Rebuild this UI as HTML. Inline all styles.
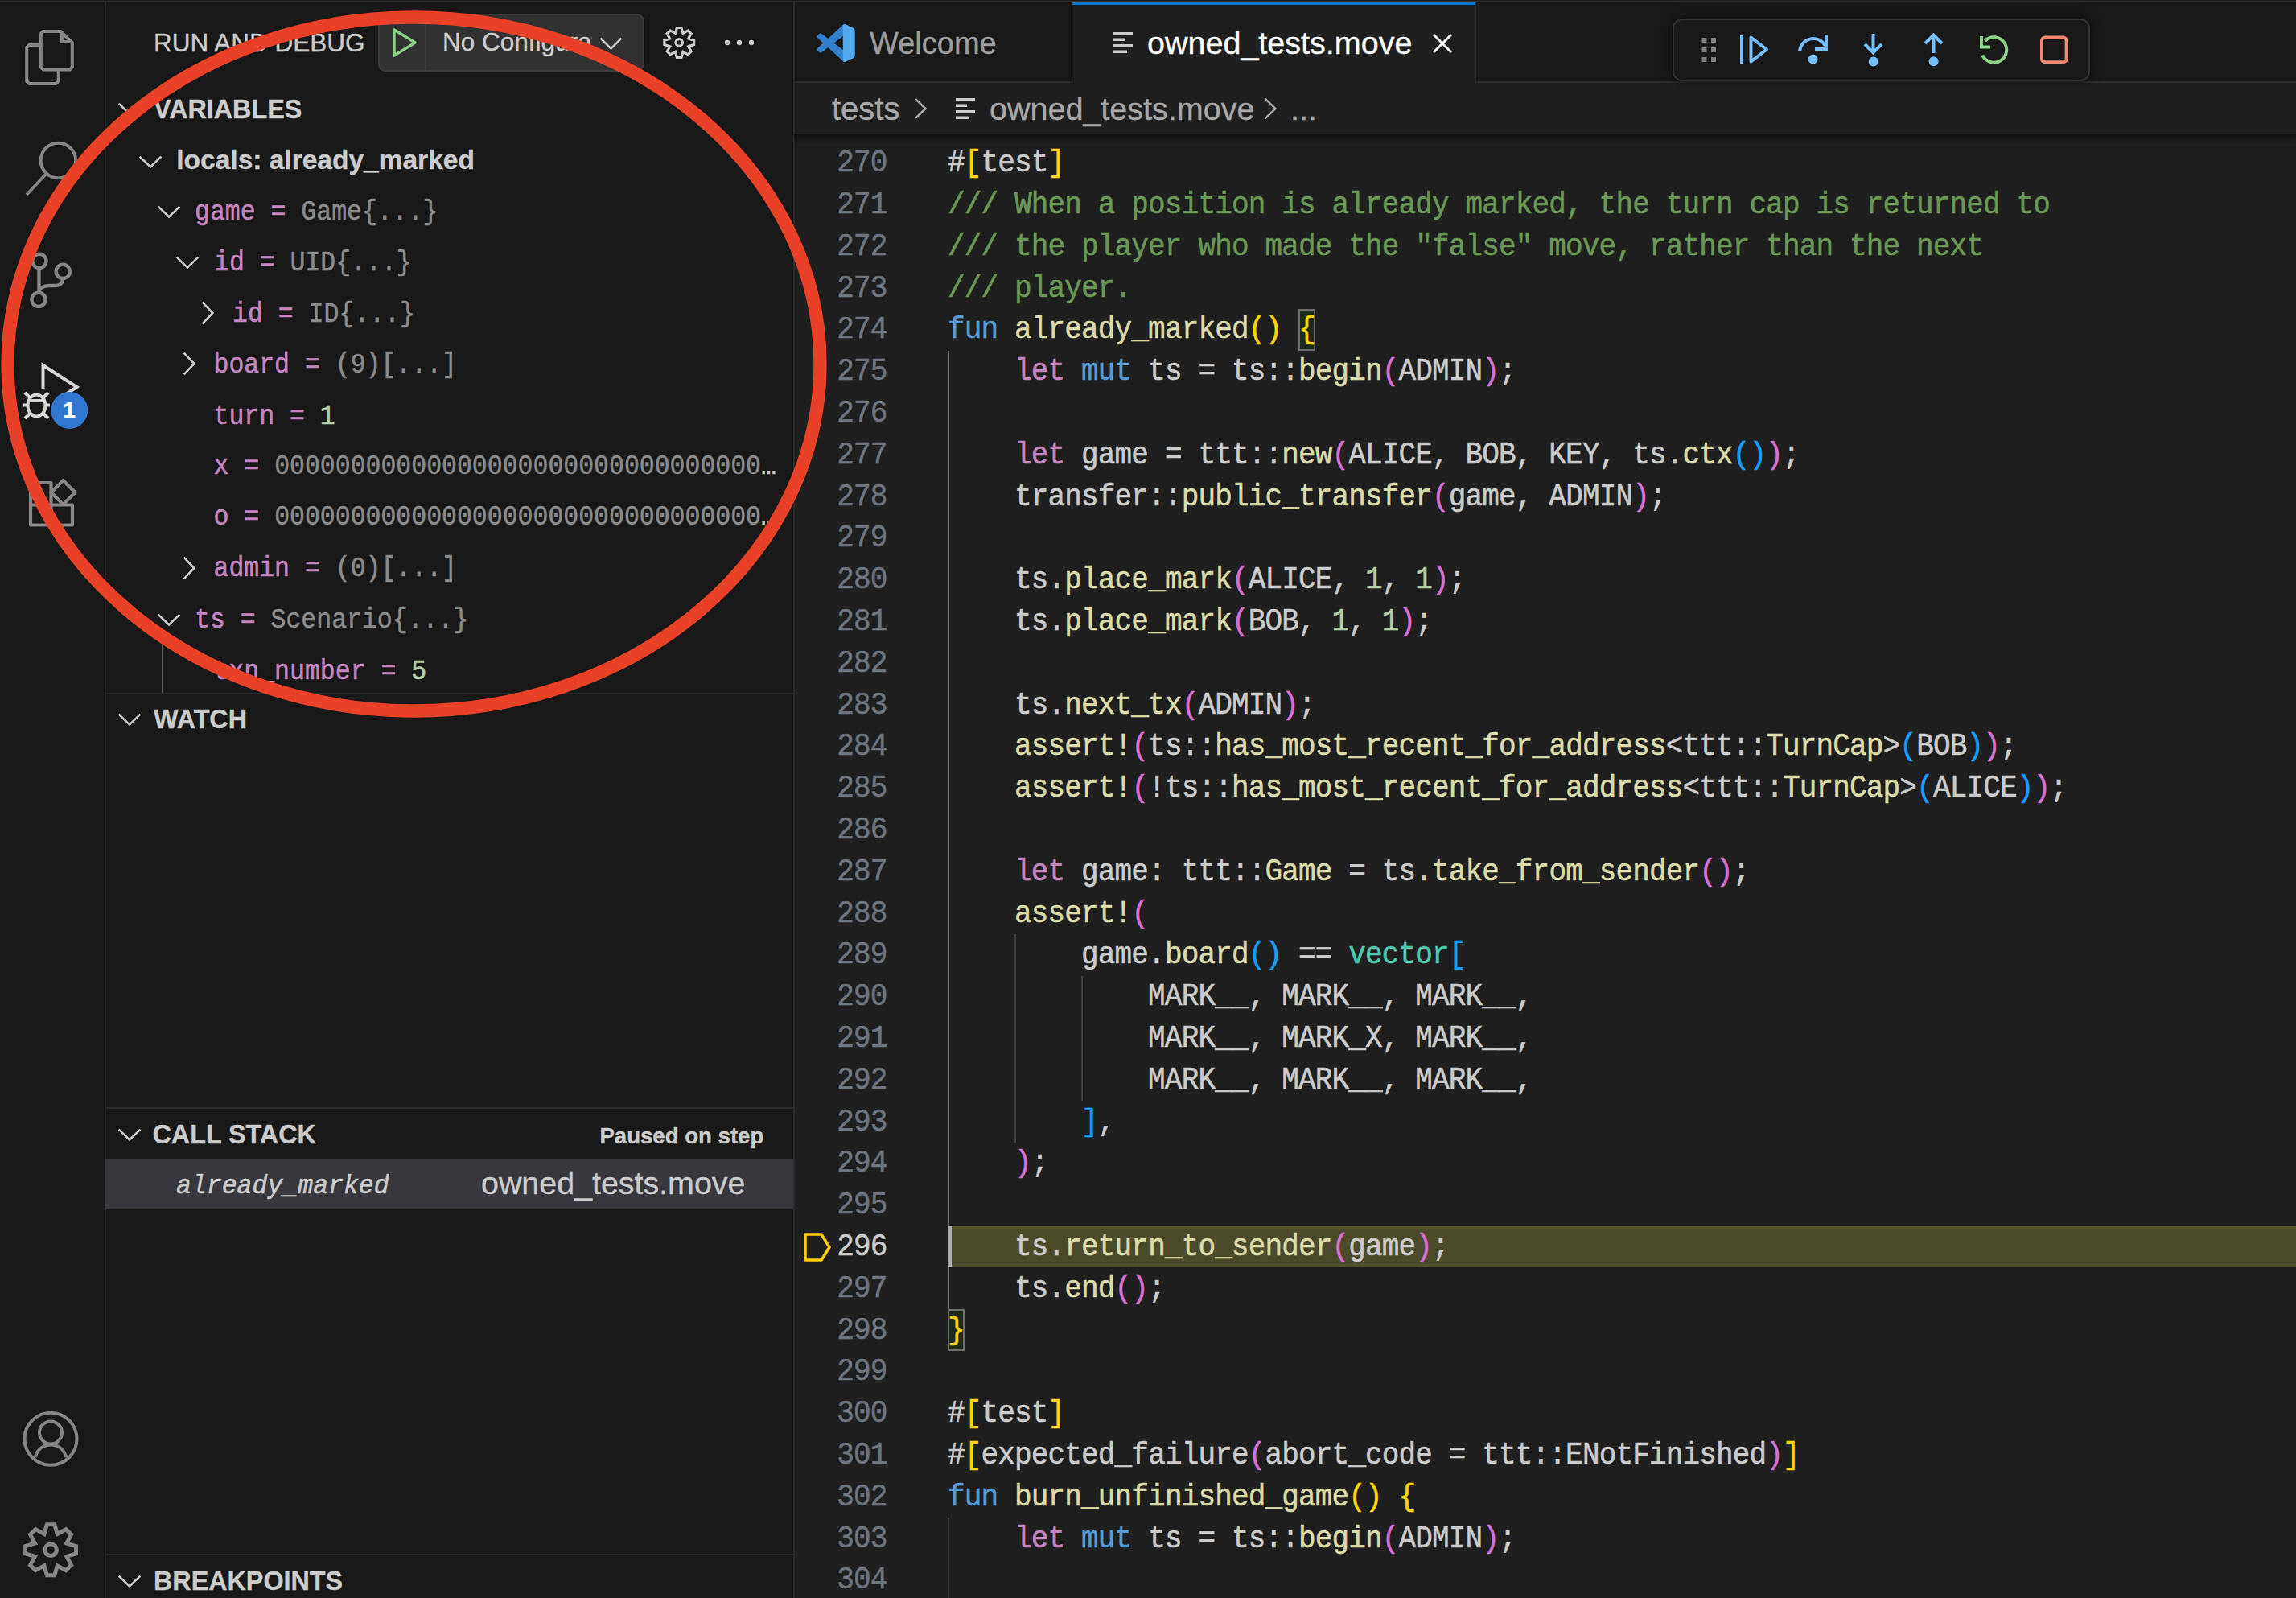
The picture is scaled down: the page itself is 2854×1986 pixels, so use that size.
<!DOCTYPE html>
<html><head><meta charset="utf-8"><style>
html,body{margin:0;padding:0;width:2854px;height:1986px;overflow:hidden;background:#1f1f1f;}
.r{position:absolute;}
.t{position:absolute;font-family:"Liberation Sans",sans-serif;white-space:nowrap;-webkit-text-stroke:0.35px currentColor;}
.m{position:absolute;font-family:"Liberation Mono",monospace;white-space:pre;-webkit-text-stroke:0.5px currentColor;}
.ln{left:1000px;width:102.5px;text-align:right;font-size:36px;line-height:36px;}
</style></head><body>
<div class="r" style="left:0px;top:0px;width:130px;height:1986px;background:#181818;"></div>
<div class="r" style="left:131px;top:0px;width:855px;height:1986px;background:#181818;"></div>
<div class="r" style="left:130px;top:0px;width:2px;height:1986px;background:#2b2b2b;"></div>
<div class="r" style="left:986px;top:0px;width:2px;height:1986px;background:#2b2b2b;"></div>
<div class="r" style="left:988px;top:0px;width:1866px;height:1986px;background:#1f1f1f;"></div>
<div class="r" style="left:988px;top:3px;width:1866px;height:98px;background:#181818;"></div>
<div class="r" style="left:988px;top:101px;width:1866px;height:2px;background:#2b2b2b;"></div>
<div class="r" style="left:1332px;top:3px;width:1px;height:98px;background:#2b2b2b;"></div>
<div class="r" style="left:1333px;top:3px;width:501px;height:100px;background:#1f1f1f;"></div>
<div class="r" style="left:1333px;top:3px;width:501px;height:3px;background:#0078d4;"></div>
<div class="r" style="left:1834px;top:3px;width:1px;height:98px;background:#2b2b2b;"></div>
<div class="r" style="left:0px;top:0px;width:2854px;height:1px;background:#1c1c1c;"></div>
<div class="r" style="left:0px;top:1px;width:2854px;height:2px;background:#2c2c2c;"></div>
<div class="r" style="left:987px;top:167px;width:1867px;height:12px;background:linear-gradient(#111111,rgba(31,31,31,0))"></div>
<div class="r" style="left:1178px;top:1523.5px;width:1676px;height:51.80px;box-sizing:border-box;border-top:4px solid #53522f;border-bottom:4px solid #53522f;background:#4b4a2a"></div>
<div class="r" style="left:1178.0px;top:435.7px;width:2px;height:1191.4px;background:#707070"></div>
<div class="r" style="left:1261.0px;top:1160.9px;width:2px;height:259.0px;background:#404040"></div>
<div class="r" style="left:1344.1px;top:1212.7px;width:2px;height:155.4px;background:#404040"></div>
<div class="r" style="left:1178.0px;top:1886.1px;width:2px;height:103.6px;background:#404040"></div>
<div class="r" style="left:1178px;top:1523.5px;width:5px;height:51.80px;background:#aeafad"></div>
<div class="r" style="left:1614.0px;top:383.9px;width:20.76px;height:51.80px;box-sizing:border-box;border:2px solid #6e6e6e;background:#1c2a1c"></div>
<div class="r" style="left:1178.0px;top:1627.1px;width:20.76px;height:51.80px;box-sizing:border-box;border:2px solid #6e6e6e;background:#1c2a1c"></div>
<div class="m ln" style="top:186.1px;color:#6e7681;letter-spacing:-0.844px;transform:scaleY(1.07);transform-origin:0 27.59px">270</div>
<div class="m" style="left:1178.0px;top:186.1px;font-size:36px;line-height:36px;color:#cccccc;letter-spacing:-0.844px;transform:scaleY(1.07);transform-origin:0 27.59px"><span style="color:#cccccc">#</span><span style="color:#ffd700">[</span><span style="color:#cccccc">test</span><span style="color:#ffd700">]</span></div>
<div class="m ln" style="top:237.9px;color:#6e7681;letter-spacing:-0.844px;transform:scaleY(1.07);transform-origin:0 27.59px">271</div>
<div class="m" style="left:1178.0px;top:237.9px;font-size:36px;line-height:36px;color:#cccccc;letter-spacing:-0.844px;transform:scaleY(1.07);transform-origin:0 27.59px"><span style="color:#6a9955">/// When a position is already marked, the turn cap is returned to</span></div>
<div class="m ln" style="top:289.7px;color:#6e7681;letter-spacing:-0.844px;transform:scaleY(1.07);transform-origin:0 27.59px">272</div>
<div class="m" style="left:1178.0px;top:289.7px;font-size:36px;line-height:36px;color:#cccccc;letter-spacing:-0.844px;transform:scaleY(1.07);transform-origin:0 27.59px"><span style="color:#6a9955">/// the player who made the &quot;false&quot; move, rather than the next</span></div>
<div class="m ln" style="top:341.5px;color:#6e7681;letter-spacing:-0.844px;transform:scaleY(1.07);transform-origin:0 27.59px">273</div>
<div class="m" style="left:1178.0px;top:341.5px;font-size:36px;line-height:36px;color:#cccccc;letter-spacing:-0.844px;transform:scaleY(1.07);transform-origin:0 27.59px"><span style="color:#6a9955">/// player.</span></div>
<div class="m ln" style="top:393.3px;color:#6e7681;letter-spacing:-0.844px;transform:scaleY(1.07);transform-origin:0 27.59px">274</div>
<div class="m" style="left:1178.0px;top:393.3px;font-size:36px;line-height:36px;color:#cccccc;letter-spacing:-0.844px;transform:scaleY(1.07);transform-origin:0 27.59px"><span style="color:#569cd6">fun</span><span style="color:#cccccc"> </span><span style="color:#dcdcaa">already_marked</span><span style="color:#ffd700">()</span><span style="color:#cccccc"> </span><span style="color:#ffd700">{</span></div>
<div class="m ln" style="top:445.1px;color:#6e7681;letter-spacing:-0.844px;transform:scaleY(1.07);transform-origin:0 27.59px">275</div>
<div class="m" style="left:1178.0px;top:445.1px;font-size:36px;line-height:36px;color:#cccccc;letter-spacing:-0.844px;transform:scaleY(1.07);transform-origin:0 27.59px"><span style="color:#cccccc">    </span><span style="color:#c586c0">let</span><span style="color:#cccccc"> </span><span style="color:#569cd6">mut</span><span style="color:#cccccc"> ts = ts::</span><span style="color:#dcdcaa">begin</span><span style="color:#da70d6">(</span><span style="color:#cccccc">ADMIN</span><span style="color:#da70d6">)</span><span style="color:#cccccc">;</span></div>
<div class="m ln" style="top:496.9px;color:#6e7681;letter-spacing:-0.844px;transform:scaleY(1.07);transform-origin:0 27.59px">276</div>
<div class="m ln" style="top:548.7px;color:#6e7681;letter-spacing:-0.844px;transform:scaleY(1.07);transform-origin:0 27.59px">277</div>
<div class="m" style="left:1178.0px;top:548.7px;font-size:36px;line-height:36px;color:#cccccc;letter-spacing:-0.844px;transform:scaleY(1.07);transform-origin:0 27.59px"><span style="color:#cccccc">    </span><span style="color:#c586c0">let</span><span style="color:#cccccc"> game = ttt::</span><span style="color:#dcdcaa">new</span><span style="color:#da70d6">(</span><span style="color:#cccccc">ALICE, BOB, KEY, ts.</span><span style="color:#dcdcaa">ctx</span><span style="color:#179fff">()</span><span style="color:#da70d6">)</span><span style="color:#cccccc">;</span></div>
<div class="m ln" style="top:600.5px;color:#6e7681;letter-spacing:-0.844px;transform:scaleY(1.07);transform-origin:0 27.59px">278</div>
<div class="m" style="left:1178.0px;top:600.5px;font-size:36px;line-height:36px;color:#cccccc;letter-spacing:-0.844px;transform:scaleY(1.07);transform-origin:0 27.59px"><span style="color:#cccccc">    transfer::</span><span style="color:#dcdcaa">public_transfer</span><span style="color:#da70d6">(</span><span style="color:#cccccc">game, ADMIN</span><span style="color:#da70d6">)</span><span style="color:#cccccc">;</span></div>
<div class="m ln" style="top:652.3px;color:#6e7681;letter-spacing:-0.844px;transform:scaleY(1.07);transform-origin:0 27.59px">279</div>
<div class="m ln" style="top:704.1px;color:#6e7681;letter-spacing:-0.844px;transform:scaleY(1.07);transform-origin:0 27.59px">280</div>
<div class="m" style="left:1178.0px;top:704.1px;font-size:36px;line-height:36px;color:#cccccc;letter-spacing:-0.844px;transform:scaleY(1.07);transform-origin:0 27.59px"><span style="color:#cccccc">    ts.</span><span style="color:#dcdcaa">place_mark</span><span style="color:#da70d6">(</span><span style="color:#cccccc">ALICE, </span><span style="color:#b5cea8">1</span><span style="color:#cccccc">, </span><span style="color:#b5cea8">1</span><span style="color:#da70d6">)</span><span style="color:#cccccc">;</span></div>
<div class="m ln" style="top:755.9px;color:#6e7681;letter-spacing:-0.844px;transform:scaleY(1.07);transform-origin:0 27.59px">281</div>
<div class="m" style="left:1178.0px;top:755.9px;font-size:36px;line-height:36px;color:#cccccc;letter-spacing:-0.844px;transform:scaleY(1.07);transform-origin:0 27.59px"><span style="color:#cccccc">    ts.</span><span style="color:#dcdcaa">place_mark</span><span style="color:#da70d6">(</span><span style="color:#cccccc">BOB, </span><span style="color:#b5cea8">1</span><span style="color:#cccccc">, </span><span style="color:#b5cea8">1</span><span style="color:#da70d6">)</span><span style="color:#cccccc">;</span></div>
<div class="m ln" style="top:807.7px;color:#6e7681;letter-spacing:-0.844px;transform:scaleY(1.07);transform-origin:0 27.59px">282</div>
<div class="m ln" style="top:859.5px;color:#6e7681;letter-spacing:-0.844px;transform:scaleY(1.07);transform-origin:0 27.59px">283</div>
<div class="m" style="left:1178.0px;top:859.5px;font-size:36px;line-height:36px;color:#cccccc;letter-spacing:-0.844px;transform:scaleY(1.07);transform-origin:0 27.59px"><span style="color:#cccccc">    ts.</span><span style="color:#dcdcaa">next_tx</span><span style="color:#da70d6">(</span><span style="color:#cccccc">ADMIN</span><span style="color:#da70d6">)</span><span style="color:#cccccc">;</span></div>
<div class="m ln" style="top:911.3px;color:#6e7681;letter-spacing:-0.844px;transform:scaleY(1.07);transform-origin:0 27.59px">284</div>
<div class="m" style="left:1178.0px;top:911.3px;font-size:36px;line-height:36px;color:#cccccc;letter-spacing:-0.844px;transform:scaleY(1.07);transform-origin:0 27.59px"><span style="color:#cccccc">    </span><span style="color:#dcdcaa">assert!</span><span style="color:#da70d6">(</span><span style="color:#cccccc">ts::</span><span style="color:#dcdcaa">has_most_recent_for_address</span><span style="color:#cccccc">&lt;ttt::</span><span style="color:#dcdcaa">TurnCap</span><span style="color:#cccccc">&gt;</span><span style="color:#179fff">(</span><span style="color:#cccccc">BOB</span><span style="color:#179fff">)</span><span style="color:#da70d6">)</span><span style="color:#cccccc">;</span></div>
<div class="m ln" style="top:963.1px;color:#6e7681;letter-spacing:-0.844px;transform:scaleY(1.07);transform-origin:0 27.59px">285</div>
<div class="m" style="left:1178.0px;top:963.1px;font-size:36px;line-height:36px;color:#cccccc;letter-spacing:-0.844px;transform:scaleY(1.07);transform-origin:0 27.59px"><span style="color:#cccccc">    </span><span style="color:#dcdcaa">assert!</span><span style="color:#da70d6">(</span><span style="color:#cccccc">!ts::</span><span style="color:#dcdcaa">has_most_recent_for_address</span><span style="color:#cccccc">&lt;ttt::</span><span style="color:#dcdcaa">TurnCap</span><span style="color:#cccccc">&gt;</span><span style="color:#179fff">(</span><span style="color:#cccccc">ALICE</span><span style="color:#179fff">)</span><span style="color:#da70d6">)</span><span style="color:#cccccc">;</span></div>
<div class="m ln" style="top:1014.9px;color:#6e7681;letter-spacing:-0.844px;transform:scaleY(1.07);transform-origin:0 27.59px">286</div>
<div class="m ln" style="top:1066.7px;color:#6e7681;letter-spacing:-0.844px;transform:scaleY(1.07);transform-origin:0 27.59px">287</div>
<div class="m" style="left:1178.0px;top:1066.7px;font-size:36px;line-height:36px;color:#cccccc;letter-spacing:-0.844px;transform:scaleY(1.07);transform-origin:0 27.59px"><span style="color:#cccccc">    </span><span style="color:#c586c0">let</span><span style="color:#cccccc"> game: ttt::</span><span style="color:#dcdcaa">Game</span><span style="color:#cccccc"> = ts.</span><span style="color:#dcdcaa">take_from_sender</span><span style="color:#da70d6">()</span><span style="color:#cccccc">;</span></div>
<div class="m ln" style="top:1118.5px;color:#6e7681;letter-spacing:-0.844px;transform:scaleY(1.07);transform-origin:0 27.59px">288</div>
<div class="m" style="left:1178.0px;top:1118.5px;font-size:36px;line-height:36px;color:#cccccc;letter-spacing:-0.844px;transform:scaleY(1.07);transform-origin:0 27.59px"><span style="color:#cccccc">    </span><span style="color:#dcdcaa">assert!</span><span style="color:#da70d6">(</span></div>
<div class="m ln" style="top:1170.3px;color:#6e7681;letter-spacing:-0.844px;transform:scaleY(1.07);transform-origin:0 27.59px">289</div>
<div class="m" style="left:1178.0px;top:1170.3px;font-size:36px;line-height:36px;color:#cccccc;letter-spacing:-0.844px;transform:scaleY(1.07);transform-origin:0 27.59px"><span style="color:#cccccc">        game.</span><span style="color:#dcdcaa">board</span><span style="color:#179fff">()</span><span style="color:#cccccc"> == </span><span style="color:#4ec9b0">vector</span><span style="color:#179fff">[</span></div>
<div class="m ln" style="top:1222.1px;color:#6e7681;letter-spacing:-0.844px;transform:scaleY(1.07);transform-origin:0 27.59px">290</div>
<div class="m" style="left:1178.0px;top:1222.1px;font-size:36px;line-height:36px;color:#cccccc;letter-spacing:-0.844px;transform:scaleY(1.07);transform-origin:0 27.59px"><span style="color:#cccccc">            MARK__, MARK__, MARK__,</span></div>
<div class="m ln" style="top:1273.9px;color:#6e7681;letter-spacing:-0.844px;transform:scaleY(1.07);transform-origin:0 27.59px">291</div>
<div class="m" style="left:1178.0px;top:1273.9px;font-size:36px;line-height:36px;color:#cccccc;letter-spacing:-0.844px;transform:scaleY(1.07);transform-origin:0 27.59px"><span style="color:#cccccc">            MARK__, MARK_X, MARK__,</span></div>
<div class="m ln" style="top:1325.7px;color:#6e7681;letter-spacing:-0.844px;transform:scaleY(1.07);transform-origin:0 27.59px">292</div>
<div class="m" style="left:1178.0px;top:1325.7px;font-size:36px;line-height:36px;color:#cccccc;letter-spacing:-0.844px;transform:scaleY(1.07);transform-origin:0 27.59px"><span style="color:#cccccc">            MARK__, MARK__, MARK__,</span></div>
<div class="m ln" style="top:1377.5px;color:#6e7681;letter-spacing:-0.844px;transform:scaleY(1.07);transform-origin:0 27.59px">293</div>
<div class="m" style="left:1178.0px;top:1377.5px;font-size:36px;line-height:36px;color:#cccccc;letter-spacing:-0.844px;transform:scaleY(1.07);transform-origin:0 27.59px"><span style="color:#cccccc">        </span><span style="color:#179fff">]</span><span style="color:#cccccc">,</span></div>
<div class="m ln" style="top:1429.3px;color:#6e7681;letter-spacing:-0.844px;transform:scaleY(1.07);transform-origin:0 27.59px">294</div>
<div class="m" style="left:1178.0px;top:1429.3px;font-size:36px;line-height:36px;color:#cccccc;letter-spacing:-0.844px;transform:scaleY(1.07);transform-origin:0 27.59px"><span style="color:#cccccc">    </span><span style="color:#da70d6">)</span><span style="color:#cccccc">;</span></div>
<div class="m ln" style="top:1481.1px;color:#6e7681;letter-spacing:-0.844px;transform:scaleY(1.07);transform-origin:0 27.59px">295</div>
<div class="m ln" style="top:1532.9px;color:#cccccc;letter-spacing:-0.844px;transform:scaleY(1.07);transform-origin:0 27.59px">296</div>
<div class="m" style="left:1178.0px;top:1532.9px;font-size:36px;line-height:36px;color:#cccccc;letter-spacing:-0.844px;transform:scaleY(1.07);transform-origin:0 27.59px"><span style="color:#cccccc">    ts.</span><span style="color:#dcdcaa">return_to_sender</span><span style="color:#da70d6">(</span><span style="color:#cccccc">game</span><span style="color:#da70d6">)</span><span style="color:#cccccc">;</span></div>
<div class="m ln" style="top:1584.7px;color:#6e7681;letter-spacing:-0.844px;transform:scaleY(1.07);transform-origin:0 27.59px">297</div>
<div class="m" style="left:1178.0px;top:1584.7px;font-size:36px;line-height:36px;color:#cccccc;letter-spacing:-0.844px;transform:scaleY(1.07);transform-origin:0 27.59px"><span style="color:#cccccc">    ts.</span><span style="color:#dcdcaa">end</span><span style="color:#da70d6">()</span><span style="color:#cccccc">;</span></div>
<div class="m ln" style="top:1636.5px;color:#6e7681;letter-spacing:-0.844px;transform:scaleY(1.07);transform-origin:0 27.59px">298</div>
<div class="m" style="left:1178.0px;top:1636.5px;font-size:36px;line-height:36px;color:#cccccc;letter-spacing:-0.844px;transform:scaleY(1.07);transform-origin:0 27.59px"><span style="color:#ffd700">}</span></div>
<div class="m ln" style="top:1688.3px;color:#6e7681;letter-spacing:-0.844px;transform:scaleY(1.07);transform-origin:0 27.59px">299</div>
<div class="m ln" style="top:1740.1px;color:#6e7681;letter-spacing:-0.844px;transform:scaleY(1.07);transform-origin:0 27.59px">300</div>
<div class="m" style="left:1178.0px;top:1740.1px;font-size:36px;line-height:36px;color:#cccccc;letter-spacing:-0.844px;transform:scaleY(1.07);transform-origin:0 27.59px"><span style="color:#cccccc">#</span><span style="color:#ffd700">[</span><span style="color:#cccccc">test</span><span style="color:#ffd700">]</span></div>
<div class="m ln" style="top:1791.9px;color:#6e7681;letter-spacing:-0.844px;transform:scaleY(1.07);transform-origin:0 27.59px">301</div>
<div class="m" style="left:1178.0px;top:1791.9px;font-size:36px;line-height:36px;color:#cccccc;letter-spacing:-0.844px;transform:scaleY(1.07);transform-origin:0 27.59px"><span style="color:#cccccc">#</span><span style="color:#ffd700">[</span><span style="color:#cccccc">expected_failure</span><span style="color:#da70d6">(</span><span style="color:#cccccc">abort_code = ttt::ENotFinished</span><span style="color:#da70d6">)</span><span style="color:#ffd700">]</span></div>
<div class="m ln" style="top:1843.7px;color:#6e7681;letter-spacing:-0.844px;transform:scaleY(1.07);transform-origin:0 27.59px">302</div>
<div class="m" style="left:1178.0px;top:1843.7px;font-size:36px;line-height:36px;color:#cccccc;letter-spacing:-0.844px;transform:scaleY(1.07);transform-origin:0 27.59px"><span style="color:#569cd6">fun</span><span style="color:#cccccc"> </span><span style="color:#dcdcaa">burn_unfinished_game</span><span style="color:#ffd700">()</span><span style="color:#cccccc"> </span><span style="color:#ffd700">{</span></div>
<div class="m ln" style="top:1895.5px;color:#6e7681;letter-spacing:-0.844px;transform:scaleY(1.07);transform-origin:0 27.59px">303</div>
<div class="m" style="left:1178.0px;top:1895.5px;font-size:36px;line-height:36px;color:#cccccc;letter-spacing:-0.844px;transform:scaleY(1.07);transform-origin:0 27.59px"><span style="color:#cccccc">    </span><span style="color:#c586c0">let</span><span style="color:#cccccc"> </span><span style="color:#569cd6">mut</span><span style="color:#cccccc"> ts = ts::</span><span style="color:#dcdcaa">begin</span><span style="color:#da70d6">(</span><span style="color:#cccccc">ADMIN</span><span style="color:#da70d6">)</span><span style="color:#cccccc">;</span></div>
<div class="m ln" style="top:1947.3px;color:#6e7681;letter-spacing:-0.844px;transform:scaleY(1.07);transform-origin:0 27.59px">304</div>
<svg class="r" style="left:995px;top:1528px" width="42" height="44" viewBox="0 0 42 44"><path d="M6 6 H26 L36 22 L26 38 H6 Z" fill="none" stroke="#ffcc00" stroke-width="3.5" stroke-linejoin="round"/></svg>
<svg class="r" style="left:1015px;top:30px" width="48" height="47" viewBox="0 0 100 100">
<path fill="#3280cc" d="M96.46 10.8 75.86.87a6.23 6.23 0 0 0-7.1 1.2L29.33 38.04 12.15 25a4.16 4.16 0 0 0-5.32.24L1.32 30.25a4.16 4.16 0 0 0 0 6.16L16.2 50 1.33 63.59a4.16 4.16 0 0 0 0 6.16l5.5 5a4.16 4.16 0 0 0 5.32.24l17.18-13.04 39.43 35.97a6.23 6.23 0 0 0 7.1 1.2l20.6-9.92A6.25 6.25 0 0 0 100 83.57V16.43a6.25 6.25 0 0 0-3.54-5.63ZM75.02 72.7 45.1 50l29.92-22.7v45.4Z"/>
<path fill="#2489ca" d="M96.46 10.8 75.86.87a6.23 6.23 0 0 0-7.1 1.2L29.33 38.04 12.15 25a4.16 4.16 0 0 0-5.32.24L1.32 30.25a4.16 4.16 0 0 0 0 6.16L16.2 50 29.33 38.04 75.02 2.7v24.6L45.1 50Z" opacity="0.0"/>
<path fill="#56aaec" d="M75.86 99.13a6.23 6.23 0 0 1-7.1-1.2V2.07a6.23 6.23 0 0 1 7.1-1.2l20.6 9.93A6.25 6.25 0 0 1 100 16.43v67.14a6.25 6.25 0 0 1-3.54 5.63Z"/>
</svg>
<div class="t" style="left:1081.0px;top:34.8px;font-size:38px;line-height:38px;color:#9d9d9d;font-weight:400;">Welcome</div>
<svg class="r" style="left:1384px;top:40px" width="24" height="26" viewBox="0 0 24 26"><g fill="#cccccc"><rect x="0" y="0" width="24" height="3.5"/><rect x="0" y="7.5" width="14" height="3.5"/><rect x="0" y="15" width="24" height="3.5"/><rect x="0" y="22.5" width="17" height="3.5"/></g></svg>
<div class="t" style="left:1426.0px;top:33.6px;font-size:39.5px;line-height:39.5px;color:#ffffff;font-weight:400;">owned_tests.move</div>
<svg class="r" style="left:1780px;top:41px" width="26" height="26" viewBox="0 0 26 26"><path d="M2 2 L24 24 M24 2 L2 24" stroke="#ffffff" stroke-width="3"/></svg>
<div class="t" style="left:1034.0px;top:115.1px;font-size:40px;line-height:40px;color:#a9a9a9;font-weight:400;">tests</div>
<svg class="r" style="left:1135px;top:120px" width="18" height="30" viewBox="0 0 18 30"><path d="M2.6 2.6 L15.4 15.0 L2.6 27.4" fill="none" stroke="#a9a9a9" stroke-width="2.6"/></svg>
<svg class="r" style="left:1188px;top:122px" width="24" height="26" viewBox="0 0 24 26"><g fill="#cccccc"><rect x="0" y="0" width="24" height="3.5"/><rect x="0" y="7.5" width="14" height="3.5"/><rect x="0" y="15" width="24" height="3.5"/><rect x="0" y="22.5" width="17" height="3.5"/></g></svg>
<div class="t" style="left:1230.0px;top:115.6px;font-size:39.5px;line-height:39.5px;color:#a9a9a9;font-weight:400;">owned_tests.move</div>
<svg class="r" style="left:1570px;top:120px" width="18" height="30" viewBox="0 0 18 30"><path d="M2.6 2.6 L15.4 15.0 L2.6 27.4" fill="none" stroke="#a9a9a9" stroke-width="2.6"/></svg>
<div class="t" style="left:1604.0px;top:115.6px;font-size:39.5px;line-height:39.5px;color:#a9a9a9;font-weight:400;">...</div>
<div class="r" style="left:2079px;top:23px;width:519px;height:78px;box-sizing:border-box;border:2px solid #333333;border-radius:12px;background:#181818;box-shadow:0 0 14px rgba(0,0,0,0.6)"></div>
<svg class="r" style="left:2079px;top:23px" width="519" height="78" viewBox="0 0 519 78"><g fill="#7f7f7f"><rect x="36.5" y="24" width="6" height="6"/><rect x="48" y="24" width="6" height="6"/><rect x="36.5" y="36" width="6" height="6"/><rect x="48" y="36" width="6" height="6"/><rect x="36.5" y="48" width="6" height="6"/><rect x="48" y="48" width="6" height="6"/></g><g fill="none" stroke="#75beff" stroke-width="4"><path d="M86 21 V56"/><path d="M97.5 23.5 L117 38.5 L97.5 53.5 Z" stroke-linejoin="round"/><path d="M158 41 A17 17 0 0 1 190 34"/><path d="M191 20 V38 H177"/><path d="M249.5 19 V42 M239 32 L249.5 42.5 L260 32"/><path d="M324.5 43 V21 M314 31 L324.5 20.5 L335 31"/></g><g fill="#75beff"><circle cx="174.6" cy="50.4" r="6"/><circle cx="249.7" cy="53.4" r="6"/><circle cx="324.6" cy="53.2" r="6"/></g><path d="M385.2 45.5 A15.7 15.7 0 1 0 388.5 27.8" fill="none" stroke="#89d185" stroke-width="4"/><path d="M384 22 V35.5 H395" fill="none" stroke="#89d185" stroke-width="4"/><rect x="459" y="23.6" width="30.6" height="30.6" rx="4" fill="none" stroke="#f48771" stroke-width="4"/></svg>
<div class="t" style="left:191.0px;top:38.3px;font-size:31.5px;line-height:31.5px;color:#cccccc;font-weight:400;">RUN AND DEBUG</div>
<div class="r" style="left:470px;top:17px;width:331px;height:72px;box-sizing:border-box;border:2px solid #3c3c3c;border-radius:9px;background:#313131"></div>
<div class="r" style="left:528px;top:19px;width:2px;height:68px;background:#3c3c3c;"></div>
<svg class="r" style="left:485px;top:33px" width="36" height="40" viewBox="0 0 36 40"><path d="M5 4 L31 20 L5 36 Z" fill="none" stroke="#89d185" stroke-width="3.5" stroke-linejoin="round"/></svg>
<div class="t" style="left:550px;top:37.3px;font-size:31.5px;line-height:31.5px;color:#cccccc;width:186px;overflow:hidden;white-space:nowrap">No Configurations</div>
<svg class="r" style="left:744px;top:45px" width="31" height="18" viewBox="0 0 31 18"><path d="M2.6 2.6 L15.5 15.4 L28.4 2.6" fill="none" stroke="#cccccc" stroke-width="2.6"/></svg>
<svg class="r" style="left:820px;top:29px" width="48" height="48" viewBox="0 0 48 48"><path d="M19.43 12.39 L21.45 5.50 L26.95 5.50 L28.97 12.39 L35.27 8.95 L39.15 12.83 L35.71 19.13 L42.60 21.15 L42.60 26.65 L35.71 28.67 L39.15 34.97 L35.27 38.85 L28.97 35.41 L26.95 42.30 L21.45 42.30 L19.43 35.41 L13.13 38.85 L9.25 34.97 L12.69 28.67 L5.80 26.65 L5.80 21.15 L12.69 19.13 L9.25 12.83 L13.13 8.95 Z" fill="none" stroke="#cccccc" stroke-width="3.2" stroke-linejoin="miter" stroke-miterlimit="10"/><circle cx="24.2" cy="23.9" r="4.27" fill="none" stroke="#cccccc" stroke-width="3.2"/></svg>
<svg class="r" style="left:895px;top:45px" width="48" height="16" viewBox="0 0 48 16"><g fill="#cccccc"><circle cx="9" cy="8" r="3.2"/><circle cx="24" cy="8" r="3.2"/><circle cx="39" cy="8" r="3.2"/></g></svg>
<svg class="r" style="left:145px;top:126px" width="32" height="18" viewBox="0 0 32 18"><path d="M2.6 2.6 L16.0 15.4 L29.4 2.6" fill="none" stroke="#cccccc" stroke-width="2.6"/></svg>
<div class="t" style="left:191.0px;top:119.7px;font-size:32.3px;line-height:32.3px;color:#cccccc;font-weight:700;">VARIABLES</div>
<svg class="r" style="left:171px;top:192px" width="32" height="18" viewBox="0 0 32 18"><path d="M2.6 2.6 L16.0 15.4 L29.4 2.6" fill="none" stroke="#cccccc" stroke-width="2.6"/></svg>
<div class="t" style="left:219.3px;top:181.6px;font-size:33.5px;line-height:33.5px;color:#cccccc;font-weight:700;">locals: already_marked</div>
<svg class="r" style="left:194px;top:254px" width="32" height="18" viewBox="0 0 32 18"><path d="M2.6 2.6 L16.0 15.4 L29.4 2.6" fill="none" stroke="#cccccc" stroke-width="2.6"/></svg>
<div class="m" style="left:242.0px;top:248.9px;font-size:31.5px;line-height:31.5px;color:#cccccc;white-space:nowrap;transform:scaleY(1.1);transform-origin:0 24.14px"><span style="color:#c586c0">game</span><span style="color:#c586c0"> = </span><span style="color:#8c8c8c">Game{...}</span></div>
<svg class="r" style="left:217px;top:317px" width="32" height="18" viewBox="0 0 32 18"><path d="M2.6 2.6 L16.0 15.4 L29.4 2.6" fill="none" stroke="#cccccc" stroke-width="2.6"/></svg>
<div class="m" style="left:266.0px;top:312.2px;font-size:31.5px;line-height:31.5px;color:#cccccc;white-space:nowrap;transform:scaleY(1.1);transform-origin:0 24.14px"><span style="color:#c586c0">id</span><span style="color:#c586c0"> = </span><span style="color:#8c8c8c">UID{...}</span></div>
<svg class="r" style="left:249px;top:373px" width="18" height="32" viewBox="0 0 18 32"><path d="M2.6 2.6 L15.4 16.0 L2.6 29.4" fill="none" stroke="#cccccc" stroke-width="2.6"/></svg>
<div class="m" style="left:289.0px;top:376.4px;font-size:31.5px;line-height:31.5px;color:#cccccc;white-space:nowrap;transform:scaleY(1.1);transform-origin:0 24.14px"><span style="color:#c586c0">id</span><span style="color:#c586c0"> = </span><span style="color:#8c8c8c">ID{...}</span></div>
<svg class="r" style="left:226px;top:436px" width="18" height="32" viewBox="0 0 18 32"><path d="M2.6 2.6 L15.4 16.0 L2.6 29.4" fill="none" stroke="#cccccc" stroke-width="2.6"/></svg>
<div class="m" style="left:265.5px;top:439.1px;font-size:31.5px;line-height:31.5px;color:#cccccc;white-space:nowrap;transform:scaleY(1.1);transform-origin:0 24.14px"><span style="color:#c586c0">board</span><span style="color:#c586c0"> = </span><span style="color:#8c8c8c">(9)[...]</span></div>
<div class="m" style="left:265.5px;top:502.7px;font-size:31.5px;line-height:31.5px;color:#cccccc;white-space:nowrap;transform:scaleY(1.1);transform-origin:0 24.14px"><span style="color:#c586c0">turn</span><span style="color:#c586c0"> = </span><span style="color:#b5cea8">1</span></div>
<div class="m" style="left:265.5px;top:565.4px;font-size:31.5px;line-height:31.5px;color:#cccccc;white-space:nowrap;width:705px;overflow:hidden;text-overflow:ellipsis;transform:scaleY(1.1);transform-origin:0 24.14px"><span style="color:#c586c0">x = </span><span style="color:#8c8c8c">000000000000000000000000000000000000000000000000000000000000</span></div>
<div class="m" style="left:265.5px;top:628.2px;font-size:31.5px;line-height:31.5px;color:#cccccc;white-space:nowrap;width:705px;overflow:hidden;text-overflow:ellipsis;transform:scaleY(1.1);transform-origin:0 24.14px"><span style="color:#c586c0">o = </span><span style="color:#8c8c8c">000000000000000000000000000000000000000000000000000000000000</span></div>
<svg class="r" style="left:226px;top:690px" width="18" height="32" viewBox="0 0 18 32"><path d="M2.6 2.6 L15.4 16.0 L2.6 29.4" fill="none" stroke="#cccccc" stroke-width="2.6"/></svg>
<div class="m" style="left:265.5px;top:692.4px;font-size:31.5px;line-height:31.5px;color:#cccccc;white-space:nowrap;transform:scaleY(1.1);transform-origin:0 24.14px"><span style="color:#c586c0">admin</span><span style="color:#c586c0"> = </span><span style="color:#8c8c8c">(0)[...]</span></div>
<svg class="r" style="left:194px;top:761px" width="32" height="18" viewBox="0 0 32 18"><path d="M2.6 2.6 L16.0 15.4 L29.4 2.6" fill="none" stroke="#cccccc" stroke-width="2.6"/></svg>
<div class="m" style="left:242.0px;top:755.6px;font-size:31.5px;line-height:31.5px;color:#cccccc;white-space:nowrap;transform:scaleY(1.1);transform-origin:0 24.14px"><span style="color:#c586c0">ts</span><span style="color:#c586c0"> = </span><span style="color:#8c8c8c">Scenario{...}</span></div>
<div class="m" style="left:265.5px;top:819.8px;font-size:31.5px;line-height:31.5px;color:#cccccc;white-space:nowrap;transform:scaleY(1.1);transform-origin:0 24.14px"><span style="color:#c586c0">txn_number</span><span style="color:#c586c0"> = </span><span style="color:#b5cea8">5</span></div>
<div class="r" style="left:201px;top:801px;width:2px;height:60px;background:#585858;"></div>
<div class="r" style="left:131px;top:861px;width:855px;height:2px;background:#2b2b2b;"></div>
<svg class="r" style="left:145px;top:885px" width="32" height="18" viewBox="0 0 32 18"><path d="M2.6 2.6 L16.0 15.4 L29.4 2.6" fill="none" stroke="#cccccc" stroke-width="2.6"/></svg>
<div class="t" style="left:191.0px;top:877.7px;font-size:32.3px;line-height:32.3px;color:#cccccc;font-weight:700;">WATCH</div>
<div class="r" style="left:131px;top:1376px;width:855px;height:2px;background:#2b2b2b;"></div>
<svg class="r" style="left:145px;top:1401px" width="32" height="18" viewBox="0 0 32 18"><path d="M2.6 2.6 L16.0 15.4 L29.4 2.6" fill="none" stroke="#cccccc" stroke-width="2.6"/></svg>
<div class="t" style="left:189.5px;top:1393.7px;font-size:32.3px;line-height:32.3px;color:#cccccc;font-weight:700;">CALL STACK</div>
<div class="t" style="left:745.4px;top:1397.6px;font-size:27.6px;line-height:27.6px;color:#cccccc;font-weight:700;">Paused on step</div>
<div class="r" style="left:131px;top:1440px;width:855px;height:62px;background:#37373d;"></div>
<div class="m" style="left:219.0px;top:1458.9px;font-size:31.5px;line-height:31.5px;color:#cccccc;font-style:italic;transform:scaleY(1.08);transform-origin:0 24.14px">already_marked</div>
<div class="t" style="left:598.0px;top:1451.1px;font-size:39.4px;line-height:39.4px;color:#cccccc;font-weight:400;">owned_tests.move</div>
<div class="r" style="left:131px;top:1931px;width:855px;height:2px;background:#2b2b2b;"></div>
<svg class="r" style="left:145px;top:1956px" width="32" height="18" viewBox="0 0 32 18"><path d="M2.6 2.6 L16.0 15.4 L29.4 2.6" fill="none" stroke="#cccccc" stroke-width="2.6"/></svg>
<div class="t" style="left:191.0px;top:1948.7px;font-size:32.3px;line-height:32.3px;color:#cccccc;font-weight:700;">BREAKPOINTS</div>
<svg class="r" style="left:0px;top:0px" width="130" height="1986" viewBox="0 0 130 1986"><g fill="none" stroke="#868686" stroke-width="4" stroke-linejoin="miter"><path d="M50.8 42 L53.8 39 H75.5 L89.8 53 V83.4 L86.8 86.4 H53.8 L50.8 83.4 Z"/><path d="M76.8 39 V52 H89.8"/><path d="M50.8 56.1 H36.2 L33.2 59.1 V101 L36.2 104 H69.7 L72.7 101 V86.4"/></g><g fill="none" stroke="#868686" stroke-width="4"><circle cx="72.4" cy="199.5" r="21.7"/><path d="M57 216.5 L33 242"/></g><g fill="none" stroke="#868686" stroke-width="4.4"><circle cx="48.9" cy="324.3" r="8.6"/><circle cx="78.2" cy="337.4" r="8.6"/><circle cx="48" cy="372.3" r="8.6"/><path d="M48.4 333 V363.7"/><path d="M78 346 C78 356 70 355 62 355 C54 355 48.4 358 48.4 364"/></g><g fill="none" stroke="#d7d7d7" stroke-width="4"><path d="M53.5 483 V454 L95.5 481 L82 490" stroke-linejoin="miter"/><ellipse cx="45.5" cy="504" rx="11" ry="13.5"/><path d="M35 498 H56"/><path d="M29 503.5 H35 M56 503.5 H62 M31 488 L37 494 M60 488 L54 494 M31 520 L37 514 M60 520 L54 514"/></g><circle cx="86.3" cy="510" r="23" fill="#3077d0"/><g fill="none" stroke="#868686" stroke-width="4.2" stroke-linejoin="round"><path d="M38 600 H63.5 V652.5 H38 Z M38 627.5 H90 V652.5 H63.5"/><path d="M78.5 597 L93.5 612 L78.5 627 L63.5 612 Z"/></g><g fill="none" stroke="#868686" stroke-width="4"><circle cx="63" cy="1788.3" r="32.5"/><circle cx="63" cy="1780.4" r="14"/><path d="M43.5 1811 C47 1800 55 1795.5 63 1795.5 C71 1795.5 79 1800 82.5 1811"/></g></svg>
<div class="t" style="left:74px;top:494px;width:24px;text-align:center;font-size:28px;line-height:32px;font-weight:700;color:#ffffff">1</div>
<svg class="r" style="left:23px;top:1886px" width="80" height="80" viewBox="0 0 80 80"><path d="M31.95 20.52 L35.40 8.75 L44.80 8.75 L48.25 20.52 L59.02 14.64 L65.66 21.28 L59.78 32.05 L71.55 35.50 L71.55 44.90 L59.78 48.35 L65.66 59.12 L59.02 65.76 L48.25 59.88 L44.80 71.65 L35.40 71.65 L31.95 59.88 L21.18 65.76 L14.54 59.12 L20.42 48.35 L8.65 44.90 L8.65 35.50 L20.42 32.05 L14.54 21.28 L21.18 14.64 Z" fill="none" stroke="#868686" stroke-width="5" stroke-linejoin="miter" stroke-miterlimit="10"/><circle cx="40.1" cy="40.2" r="7.30" fill="none" stroke="#868686" stroke-width="5"/></svg>
<svg class="r" style="left:0;top:0" width="1100" height="920" viewBox="0 0 1100 920"><ellipse cx="514.5" cy="452.5" rx="505" ry="431" fill="none" stroke="#e84127" stroke-width="16.3"/></svg>
</body></html>
